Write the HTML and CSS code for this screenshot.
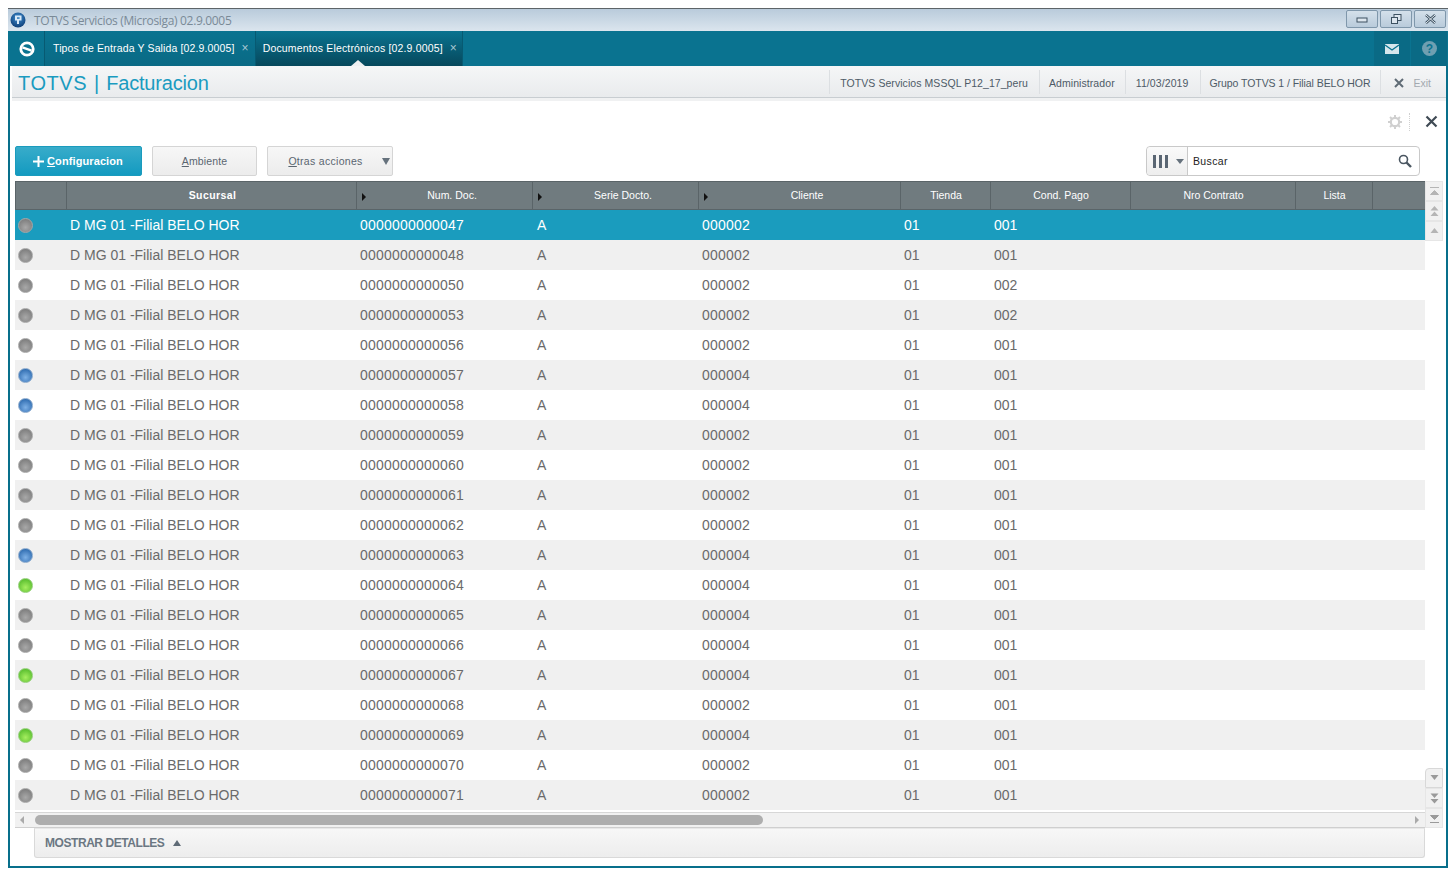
FILE: index.html
```html
<!DOCTYPE html>
<html lang="es">
<head>
<meta charset="utf-8">
<title>TOTVS Servicios</title>
<link rel="stylesheet" href="styles.css">
</head>
<body>
<div class="window">
  <div class="titlebar">
    <svg class="applogo" width="16" height="16" viewBox="0 0 16 16"><defs><radialGradient id="lg" cx="50%" cy="35%" r="65%"><stop offset="0" stop-color="#3f8fd2"/><stop offset="1" stop-color="#0f3f78"/></radialGradient></defs><circle cx="8" cy="8" r="7.500" fill="url(#lg)"/><path d="M5 3.500h6.500v5H9v3.500H7V8.500H5z" fill="#d8e9f8"/><path d="M7 5.300h2.600v1.500H7z" fill="#2a78b8"/></svg>
    <span class="title">TOTVS Servicios (Microsiga) 02.9.0005</span>
    <div class="winbtns">
      <div class="winbtn"><svg width="12" height="8" viewBox="0 0 12 8"><rect x="1" y="3" width="10" height="4" fill="#dde6ee" stroke="#3d5161"/></svg></div>
      <div class="winbtn"><svg width="12" height="12" viewBox="0 0 12 12"><rect x="4" y="1.500" width="7" height="6" fill="#dde6ee" stroke="#3d5161"/><rect x="1.500" y="4.500" width="6" height="6" fill="#dde6ee" stroke="#3d5161"/></svg></div>
      <div class="winbtn"><svg width="13" height="10" viewBox="0 0 13 10"><path d="M2 1l9 8M11 1L2 9" stroke="#3d5161" stroke-width="2.400"/><path d="M2 1l9 8M11 1L2 9" stroke="#e6edf3" stroke-width="1"/></svg></div>
    </div>
  </div>
  <div class="frame">
    <div class="tabbar">
      <div class="homebtn"><svg width="16" height="16" viewBox="0 0 16 16"><circle cx="8" cy="8" r="6.200" fill="none" stroke="#fff" stroke-width="2.800"/><path d="M3.500 6.300l9 3.400" stroke="#fff" stroke-width="2.400"/></svg></div>
      <div class="tab"><span>Tipos de Entrada Y Salida [02.9.0005]</span><span class="tabx">×</span></div>
      <div class="tab active"><span>Documentos Electrónicos [02.9.0005]</span><span class="tabx">×</span><i class="notch"></i></div>
      <div class="tabright">
        <div class="tabicon"><svg width="14" height="10" viewBox="0 0 14 10"><rect width="14" height="10" fill="#d5e6ec"/><path d="M0 1l7 5 7-5" fill="none" stroke="#0a7390" stroke-width="1.400"/></svg></div>
        <div class="tabicon"><svg width="15" height="15" viewBox="0 0 15 15"><circle cx="7.500" cy="7.500" r="7.500" fill="#6f9fb1"/><text x="7.500" y="12" text-anchor="middle" class="helpq">?</text></svg></div>
      </div>
    </div>
    <div class="appbar">
      <div class="apptitle"><span class="t1">TOTVS</span><span class="t2">|</span><span class="t3">Facturacion</span></div>
      <div class="appinfo">
        <div class="info">TOTVS Servicios MSSQL P12_17_peru</div>
        <div class="info">Administrador</div>
        <div class="info">11/03/2019</div>
        <div class="info">Grupo TOTVS 1 / Filial BELO HOR</div>
        <div class="exit"><svg width="10" height="10" viewBox="0 0 10 10"><path d="M1 1l8 8M9 1l-8 8" stroke="#5f6b75" stroke-width="2"/></svg><span>Exit</span></div>
      </div>
    </div>
    <div class="appband"></div>
    <div class="content">
      <div class="tools">
        <svg class="gear" width="14" height="14" viewBox="0 0 14 14"><circle cx="7" cy="7" r="4.200" fill="none" stroke="#d0d0d0" stroke-width="2.200"/><path d="M7 0v3M7 11v3M0 7h3M11 7h3M2 2l2 2M10 10l2 2M12 2l-2 2M4 10l-2 2" stroke="#d0d0d0" stroke-width="2"/></svg>
        <i class="dots"></i>
        <svg width="13" height="13" viewBox="0 0 13 13"><path d="M1.500 1.500l10 10M11.500 1.500l-10 10" stroke="#3f4a54" stroke-width="2.200"/></svg>
      </div>
      <div class="actions">
        <button class="btn primary"><svg width="11" height="11" viewBox="0 0 11 11"><path d="M5.500 0v11M0 5.500h11" stroke="#fff" stroke-width="2"/></svg><span><u>C</u>onfiguracion</span></button>
        <button class="btn ambient"><span><u>A</u>mbiente</span></button>
        <button class="btn more"><span><u>O</u>tras acciones</span><i class="caret"></i></button>
        <div class="search">
          <div class="searchcols"><i class="bar"></i><i class="bar"></i><i class="bar"></i><i class="caret small"></i></div>
          <div class="searchinput"><span>Buscar</span><svg width="14" height="14" viewBox="0 0 14 14"><circle cx="5.500" cy="5.500" r="4" fill="none" stroke="#4a5661" stroke-width="1.600"/><path d="M8.500 8.500l4.500 4.500" stroke="#4a5661" stroke-width="2.400"/></svg></div>
        </div>
      </div>
      <div class="gridwrap">
        <div class="table">
          <div class="row head">
            <div class="th"></div>
            <div class="th strong">Sucursal</div>
            <div class="th sort">Num. Doc.</div>
            <div class="th sort">Serie Docto.</div>
            <div class="th sort">Cliente</div>
            <div class="th">Tienda</div>
            <div class="th">Cond. Pago</div>
            <div class="th">Nro Contrato</div>
            <div class="th">Lista</div>
            <div class="th"></div>
          </div>
          <div class="row selected"><div class="td"><i class="dot gray"></i></div><div class="td">D MG 01 -Filial BELO HOR</div><div class="td">0000000000047</div><div class="td">A</div><div class="td">000002</div><div class="td">01</div><div class="td">001</div></div>
          <div class="row"><div class="td"><i class="dot gray"></i></div><div class="td">D MG 01 -Filial BELO HOR</div><div class="td">0000000000048</div><div class="td">A</div><div class="td">000002</div><div class="td">01</div><div class="td">001</div></div>
          <div class="row"><div class="td"><i class="dot gray"></i></div><div class="td">D MG 01 -Filial BELO HOR</div><div class="td">0000000000050</div><div class="td">A</div><div class="td">000002</div><div class="td">01</div><div class="td">002</div></div>
          <div class="row"><div class="td"><i class="dot gray"></i></div><div class="td">D MG 01 -Filial BELO HOR</div><div class="td">0000000000053</div><div class="td">A</div><div class="td">000002</div><div class="td">01</div><div class="td">002</div></div>
          <div class="row"><div class="td"><i class="dot gray"></i></div><div class="td">D MG 01 -Filial BELO HOR</div><div class="td">0000000000056</div><div class="td">A</div><div class="td">000002</div><div class="td">01</div><div class="td">001</div></div>
          <div class="row"><div class="td"><i class="dot blue"></i></div><div class="td">D MG 01 -Filial BELO HOR</div><div class="td">0000000000057</div><div class="td">A</div><div class="td">000004</div><div class="td">01</div><div class="td">001</div></div>
          <div class="row"><div class="td"><i class="dot blue"></i></div><div class="td">D MG 01 -Filial BELO HOR</div><div class="td">0000000000058</div><div class="td">A</div><div class="td">000004</div><div class="td">01</div><div class="td">001</div></div>
          <div class="row"><div class="td"><i class="dot gray"></i></div><div class="td">D MG 01 -Filial BELO HOR</div><div class="td">0000000000059</div><div class="td">A</div><div class="td">000002</div><div class="td">01</div><div class="td">001</div></div>
          <div class="row"><div class="td"><i class="dot gray"></i></div><div class="td">D MG 01 -Filial BELO HOR</div><div class="td">0000000000060</div><div class="td">A</div><div class="td">000002</div><div class="td">01</div><div class="td">001</div></div>
          <div class="row"><div class="td"><i class="dot gray"></i></div><div class="td">D MG 01 -Filial BELO HOR</div><div class="td">0000000000061</div><div class="td">A</div><div class="td">000002</div><div class="td">01</div><div class="td">001</div></div>
          <div class="row"><div class="td"><i class="dot gray"></i></div><div class="td">D MG 01 -Filial BELO HOR</div><div class="td">0000000000062</div><div class="td">A</div><div class="td">000002</div><div class="td">01</div><div class="td">001</div></div>
          <div class="row"><div class="td"><i class="dot blue"></i></div><div class="td">D MG 01 -Filial BELO HOR</div><div class="td">0000000000063</div><div class="td">A</div><div class="td">000004</div><div class="td">01</div><div class="td">001</div></div>
          <div class="row"><div class="td"><i class="dot green"></i></div><div class="td">D MG 01 -Filial BELO HOR</div><div class="td">0000000000064</div><div class="td">A</div><div class="td">000004</div><div class="td">01</div><div class="td">001</div></div>
          <div class="row"><div class="td"><i class="dot gray"></i></div><div class="td">D MG 01 -Filial BELO HOR</div><div class="td">0000000000065</div><div class="td">A</div><div class="td">000004</div><div class="td">01</div><div class="td">001</div></div>
          <div class="row"><div class="td"><i class="dot gray"></i></div><div class="td">D MG 01 -Filial BELO HOR</div><div class="td">0000000000066</div><div class="td">A</div><div class="td">000004</div><div class="td">01</div><div class="td">001</div></div>
          <div class="row"><div class="td"><i class="dot green"></i></div><div class="td">D MG 01 -Filial BELO HOR</div><div class="td">0000000000067</div><div class="td">A</div><div class="td">000004</div><div class="td">01</div><div class="td">001</div></div>
          <div class="row"><div class="td"><i class="dot gray"></i></div><div class="td">D MG 01 -Filial BELO HOR</div><div class="td">0000000000068</div><div class="td">A</div><div class="td">000002</div><div class="td">01</div><div class="td">001</div></div>
          <div class="row"><div class="td"><i class="dot green"></i></div><div class="td">D MG 01 -Filial BELO HOR</div><div class="td">0000000000069</div><div class="td">A</div><div class="td">000004</div><div class="td">01</div><div class="td">001</div></div>
          <div class="row"><div class="td"><i class="dot gray"></i></div><div class="td">D MG 01 -Filial BELO HOR</div><div class="td">0000000000070</div><div class="td">A</div><div class="td">000002</div><div class="td">01</div><div class="td">001</div></div>
          <div class="row"><div class="td"><i class="dot gray"></i></div><div class="td">D MG 01 -Filial BELO HOR</div><div class="td">0000000000071</div><div class="td">A</div><div class="td">000002</div><div class="td">01</div><div class="td">001</div></div>
          <div class="hscroll"><i class="arrow left"></i><div class="track"><div class="thumb"></div></div><i class="arrow right"></i></div>
        </div>
        <div class="vscroll">
          <div class="vgroup">
            <div class="vbtn"><svg width="9" height="9" viewBox="0 0 9 9"><path d="M0 0.500h9M0.500 7.500l4-4 4 4z" stroke="#b5b5b5" fill="#b5b5b5" stroke-width="1"/></svg></div>
            <div class="vbtn"><svg width="9" height="11" viewBox="0 0 9 11"><path d="M4.500 0l4 4.500h-8zM4.500 5.500l4 4.500h-8z" fill="#b5b5b5"/></svg></div>
            <div class="vbtn"><svg width="9" height="6" viewBox="0 0 9 6"><path d="M4.500 0l4 5h-8z" fill="#b5b5b5"/></svg></div>
          </div>
          <div class="vgroup low">
            <div class="vbtn"><svg width="9" height="6" viewBox="0 0 9 6"><path d="M4.500 5l4-5h-8z" fill="#9a9a9a"/></svg></div>
            <div class="vbtn"><svg width="9" height="11" viewBox="0 0 9 11"><path d="M4.500 5l4-4.500h-8zM4.500 10.500l4-4.500h-8z" fill="#9a9a9a"/></svg></div>
            <div class="vbtn"><svg width="9" height="9" viewBox="0 0 9 9"><path d="M0 8.500h9M0.500 1.500l4 4 4-4z" stroke="#9a9a9a" fill="#9a9a9a" stroke-width="1"/></svg></div>
          </div>
        </div>
      </div>
      <div class="details"><span>MOSTRAR DETALLES</span><i class="uptri"></i></div>
    </div>
  </div>
</div>
</body>
</html>
```

FILE: styles.css
```css
* { box-sizing: border-box; }
html, body { margin: 0; padding: 0; background: #fff; }
body { padding: 8px; height: 876px; overflow: hidden; font-family: "Liberation Sans", Arial, sans-serif; }
i { display: block; }

.window { width: 1440px; height: 860px; display: flex; flex-direction: column; }

.titlebar { height: 23px; flex: none; display: flex; align-items: center; padding-left: 2px; border-top: 1px solid #5d6468; background: linear-gradient(#b9cbdb, #dbe5ee); }
.applogo { flex: none; }
.title { margin-left: 8px; font-size: 12px; color: #7a8a97; font-family: "Open Sans", sans-serif; letter-spacing: -0.33px; }
.winbtns { margin-left: auto; margin-right: 2px; display: flex; gap: 2px; align-self: flex-start; padding-top: 1px; }
.winbtn { width: 32px; height: 18px; border: 1px solid #7f97ab; border-radius: 2px; background: linear-gradient(#d4e0ea, #b9cbdb); display: flex; align-items: center; justify-content: center; }

.frame { flex: 1; display: flex; flex-direction: column; border: solid #086f8b; border-width: 0 2px 2px 2px; min-height: 0; }

.tabbar { height: 35px; flex: none; margin: 0 -2px; display: flex; background: #0a7390; }
.homebtn { width: 37px; display: flex; align-items: center; justify-content: center; border-right: 1px solid #075a72; padding-left: 2px; }
.tab { position: relative; height: 35px; display: flex; align-items: center; padding: 0 6px 1px 8px; gap: 7px; font-size: 10.5px; letter-spacing: 0.13px; color: #fff; background: linear-gradient(#0a7390, #0a6a85); border-right: 1px solid #075a72; }
.tab.active { background: linear-gradient(#0a7390, #06485c); padding: 0 5px 1px 7px; }
.tab.active span:first-child { letter-spacing: 0.16px; }
.tabx { font-size: 12px; color: #a9c8d3; line-height: 10px; }
.notch { position: absolute; left: 95px; bottom: 0; width: 0; height: 0; border: solid transparent; border-width: 0 7px 6px 7px; border-bottom-color: #eef0f2; }
.tabright { margin-left: auto; margin-right: 1px; display: flex; height: 35px; }
.tabicon { width: 37px; display: flex; align-items: center; justify-content: center; background: #0a6a85; border-left: 1px solid #0a7390; }
.helpq { font: bold 12px "Liberation Sans", sans-serif; fill: #0a7390; }

.appbar { height: 32px; flex: none; display: flex; align-items: center; justify-content: space-between; padding: 0 5px 0 6px; background: linear-gradient(#f5f6f7, #e9ebed); border-bottom: 1px solid #c8cdd1; margin-left: 2px; }
.apptitle { font-size: 20px; color: #1a9bc0; padding-top: 4px; display: flex; align-items: baseline; }
.t1 { letter-spacing: 0.55px; }
.t2 { margin-left: 7px; }
.t3 { margin-left: 7px; letter-spacing: -0.2px; }
.appinfo { display: flex; height: 24px; align-items: stretch; font-size: 10.5px; color: #4d5a66; }
.info { display: flex; align-items: center; padding: 2px 11px 0 10px; border-left: 1px solid #dcdfe2; letter-spacing: 0.06px; }
.info:nth-child(2) { padding-left: 9px; padding-right: 10px; letter-spacing: 0.08px; }
.info:nth-child(3) { letter-spacing: 0.1px; }
.info:nth-child(4) { padding-left: 9px; padding-right: 10px; letter-spacing: -0.065px; }
.exit { display: flex; align-items: center; gap: 9px; padding: 2px 10px 0 13px; border-left: 1px solid #dcdfe2; color: #a3a9af; }

.appband { height: 3px; flex: none; background: #f0f1f2; margin-left: 2px; }

.content { flex: 1; min-height: 0; display: flex; flex-direction: column; padding: 0 3px 0 5px; background: #fff; }
.tools { height: 45px; flex: none; display: flex; align-items: center; justify-content: flex-end; padding: 0 5px 4px 0; }
.gear { margin-right: 7px; }
.dots { height: 18px; width: 0; border-left: 1px dotted #d0d0d0; margin-right: 15px; }

.actions { height: 30px; flex: none; display: flex; gap: 10px; }
.btn { height: 30px; border: 1px solid #d5d5d5; border-radius: 2px; background: linear-gradient(#f7f7f7, #ececec); font: 10.5px "Liberation Sans", Arial, sans-serif; color: #5a6570; display: flex; align-items: center; justify-content: center; padding: 0; letter-spacing: 0.15px; }
.btn.primary { width: 127px; gap: 3px; color: #fff; font-weight: bold; border-color: #1a9bbd; background: linear-gradient(#38acca, #139ac0); font-size: 11px; letter-spacing: 0.1px; padding-right: 1px; }
.btn.ambient { width: 105px; }
.btn.more { width: 126px; position: relative; padding-right: 9px; letter-spacing: 0.3px; }
.caret { width: 0; height: 0; border: solid transparent; border-width: 7px 4px 0 4px; border-top-color: #66727d; position: absolute; right: 2px; top: 11px; }
.caret.small { position: static; border-width: 5px 4px 0 4px; margin-left: 5px; }

.search { margin-left: auto; margin-right: 23px; width: 274px; height: 30px; display: flex; border: 1px solid #c9c9c9; border-radius: 4px; background: #fff; }
.searchcols { width: 41px; display: flex; align-items: center; padding-left: 6px; gap: 3px; background: linear-gradient(#fafafa, #eeeeee); border-right: 1px solid #c9c9c9; border-radius: 4px 0 0 4px; }
.bar { width: 3px; height: 13px; background: #5a6673; }
.searchinput { flex: 1; display: flex; align-items: center; justify-content: space-between; padding: 0 7px 0 5px; font-size: 10.5px; letter-spacing: 0.35px; color: #222; }

.gridwrap { margin-top: 5px; display: flex; flex: none; }
.table { width: 1410px; }
.row { display: grid; grid-template-columns: 52px 290px 176px 166px 202px 90px 140px 165px 77px 52px; height: 30px; font-size: 14px; color: #6a6a6a; align-items: center; }
.row:nth-child(odd) { background: #f0f0f0; }
.row.head { height: 29px; background: #707b7f; color: #fff; font-size: 10.5px; border-top: 1px solid #5a6468; border-bottom: 1px solid #5a6468; align-items: stretch; }
.row.selected { background: #1a9cbe; color: #fff; }
.th { display: flex; align-items: center; justify-content: center; position: relative; border-right: 1px solid #d2d6d8; border-left: 1px solid #5a6468; margin-left: -1px; padding: 0 0 2px 1px; letter-spacing: 0; }
.th:first-child { margin-left: 0; }
.th:last-child { border-right: 0; }
.th.strong { font-weight: bold; letter-spacing: 0.4px; padding-left: 2px; }
.th.sort { padding-left: 15px; }
.th.sort::before { content: ""; position: absolute; left: 5px; top: 11px; border: solid transparent; border-width: 4px 0 4px 4px; border-left-color: #111; }
.td { padding-left: 3px; white-space: nowrap; }
.td:nth-child(3) { letter-spacing: 0.22px; }
.td:nth-child(4) { padding-left: 4px; }
.td:nth-child(5) { letter-spacing: 0.2px; }
.dot { width: 15px; height: 15px; border-radius: 50%; border: 1px solid #8b8b8b; }
.dot.gray { background: radial-gradient(circle at 50% 65%, #a8a8a8, #7d7d7d 80%); border-color: #a6a6a6; }
.dot.blue { background: radial-gradient(circle at 50% 65%, #7db0e6, #2f6cb0 80%); border-color: #88a8cc; }
.dot.green { background: radial-gradient(circle at 50% 65%, #a6ee60, #58bd2e 80%); border-color: #93cf78; }

.hscroll { height: 16px; margin-top: 2px; display: flex; align-items: center; background: #f1f1f1; border-top: 1px solid #d7d7d7; border-bottom: 1px solid #cfcfcf; padding: 0 6px 0 5px; }
.track { flex: 1; height: 10px; padding-left: 11px; padding-right: 5px; }
.thumb { width: 728px; height: 10px; background: #aeaeae; border-radius: 5px; }
.arrow { width: 0; height: 0; border: solid transparent; border-width: 4px; }
.arrow.left { border-left-width: 0; border-right-color: #aaa; }
.arrow.right { border-right-width: 0; border-left-color: #aaa; }

.vscroll { width: 18px; display: flex; flex-direction: column; justify-content: space-between; background: #fff; height: 647px; }
.vgroup { display: flex; flex-direction: column; }
.vgroup.low .vbtn:first-child { border-radius: 4px 0 0 0; border-color: #d8d8d8; }
.vbtn { height: 20px; display: flex; align-items: center; justify-content: center; background: #f1f1f1; border: 1px solid #e6e6e6; }

.details { margin: 0 18px 0 19px; height: 30px; flex: none; display: flex; align-items: center; gap: 9px; padding-left: 10px; font-size: 12px; font-weight: bold; letter-spacing: -0.44px; color: #6b7782; border: 1px solid #d9d9d9; border-top-color: #e8e8e8; border-radius: 0 0 3px 3px; background: linear-gradient(#f7f7f7, #ededed); }
.uptri { width: 0; height: 0; border: solid transparent; border-width: 0 4px 6px 4px; border-bottom-color: #5f6b76; }
```
